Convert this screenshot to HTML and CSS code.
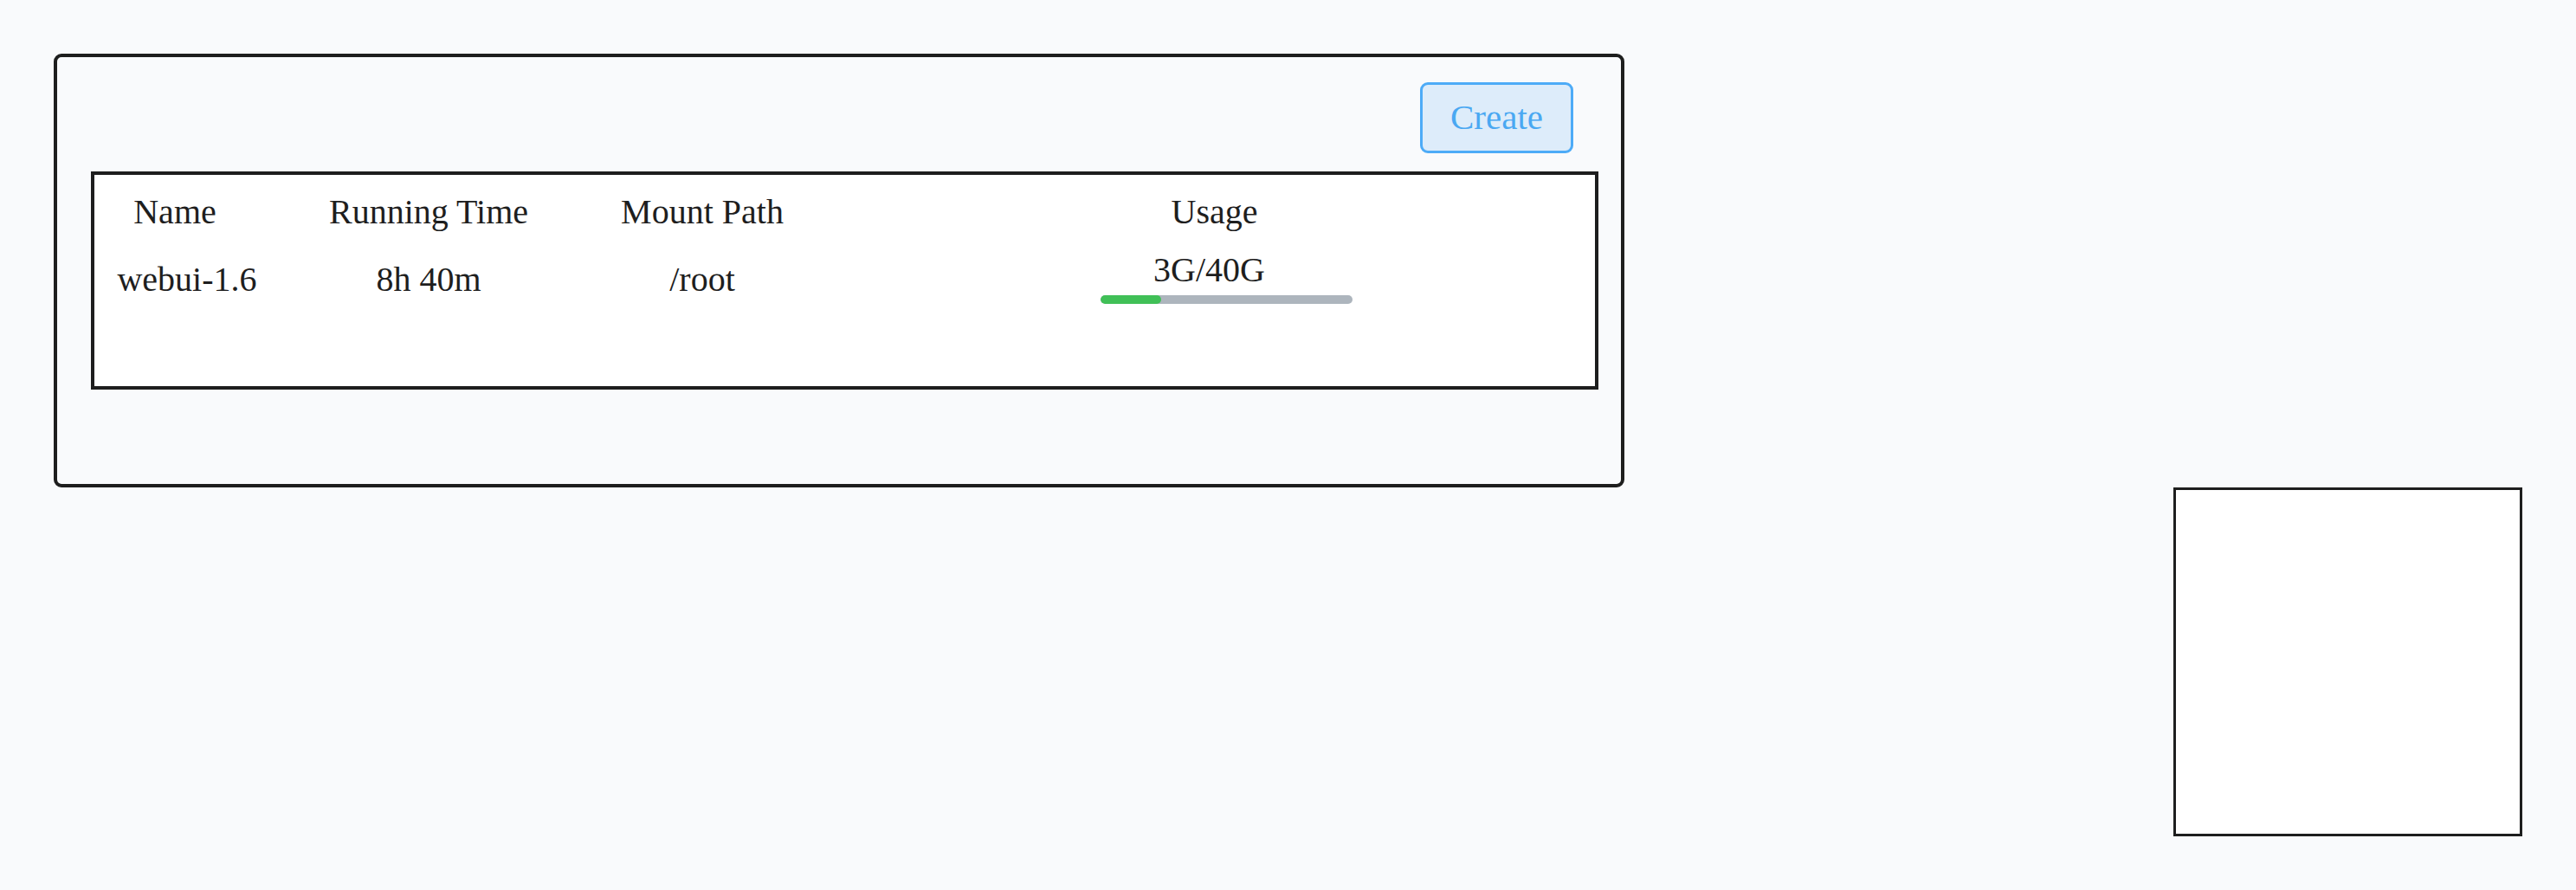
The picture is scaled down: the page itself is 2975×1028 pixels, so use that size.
FILE: index.html
```html
<!DOCTYPE html>
<html lang="en">
<head>
<meta charset="utf-8">
<title>Volumes</title>
<link rel="stylesheet" href="styles.css">
</head>
<body>
<div class="canvas">
  <section class="card">
    <button class="create">Create</button>
    <div class="table">
      <div class="cell head c1">Name</div>
      <div class="cell head">Running Time</div>
      <div class="cell head">Mount Path</div>
      <div class="cell head c4">Usage</div>
      <div class="cell val c1v">webui-1.6</div>
      <div class="cell val">8h 40m</div>
      <div class="cell val">/root</div>
      <div class="cell val usage">
        <span class="usage-text">3G/40G</span>
        <div class="bar"><div class="fill" style="width: 24%"></div></div>
      </div>
    </div>
  </section>
  <div class="square"></div>
</div>
</body>
</html>
```
FILE: styles.css
```css
html, body {
  margin: 0;
  padding: 0;
  background: #f9fafc;
}
body {
  font-family: "Liberation Serif", "Times New Roman", serif;
  color: #1e1e1e;
  width: 2975px;
  height: 1028px;
  overflow: hidden;
}
.canvas {
  display: flex;
  align-items: flex-start;
  padding: 62px 0 0 62px;
}
.card {
  box-sizing: border-box;
  width: 1814px;
  height: 501px;
  border: 4px solid #1e1e1e;
  border-radius: 9px;
  display: flex;
  flex-direction: column;
  padding: 29px 26px 0 39px;
}
.create {
  align-self: flex-end;
  margin-right: 29px;
  box-sizing: border-box;
  width: 177px;
  height: 82px;
  border: 3px solid #4dabf7;
  border-radius: 9px;
  background: #ddecfa;
  color: #4aa8f2;
  font-family: "Liberation Serif", "Times New Roman", serif;
  font-size: 41px;
  line-height: 1;
  padding: 0 0 2px 0;
  cursor: pointer;
}
.table {
  box-sizing: border-box;
  margin-top: 21px;
  height: 252px;
  border: 4px solid #1e1e1e;
  background: #ffffff;
  display: grid;
  grid-template-columns: 200px 372px 260px 1fr;
  grid-auto-rows: 46px;
  row-gap: 32px;
  padding-top: 20px;
  align-content: start;
}
.cell {
  font-size: 40px;
  line-height: 46px;
  text-align: center;
  white-space: nowrap;
}
.head.c1 { padding-right: 14px; }
.val.c1v { padding-left: 14px; }
.head.c4 { padding-left: 22px; }
.usage {
  display: flex;
  flex-direction: column;
  align-items: center;
  margin-top: -11px;
  padding-left: 10px;
}
.bar {
  margin-top: 6px;
  margin-left: 40px;
  width: 291px;
  height: 10px;
  border-radius: 5px;
  background: #adb5bd;
  overflow: hidden;
  flex: none;
}
.fill {
  height: 100%;
  background: #40c057;
  border-radius: 5px;
}
.square {
  box-sizing: border-box;
  margin-left: 634px;
  margin-top: 501px;
  width: 403px;
  height: 403px;
  border: 3px solid #1e1e1e;
  background: #ffffff;
}
```
